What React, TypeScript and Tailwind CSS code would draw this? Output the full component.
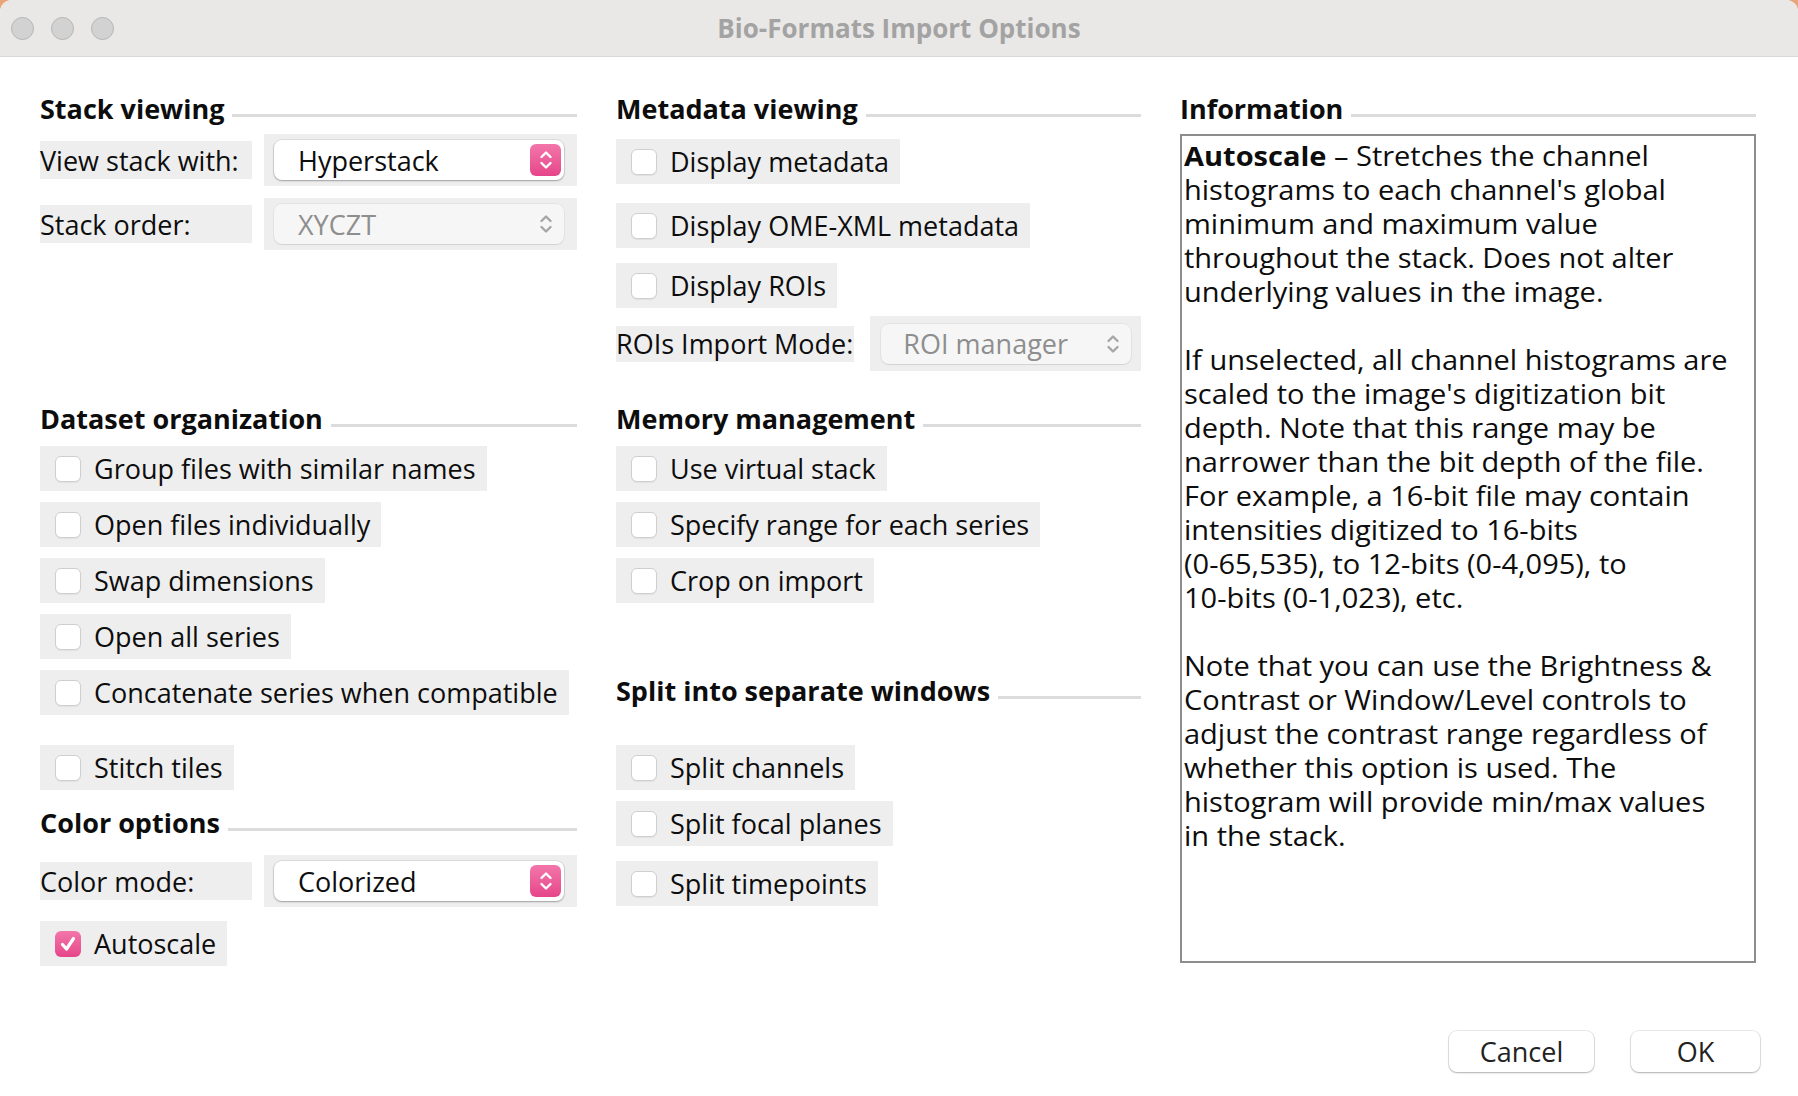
import type { ReactNode } from "react";

const info: ReactNode[] = [
  <>
    <b>Autoscale</b> – Stretches the channel
  </>,
  "histograms to each channel's global",
  "minimum and maximum value",
  "throughout the stack. Does not alter",
  "underlying values in the image.",
  "",
  "If unselected, all channel histograms are",
  "scaled to the image's digitization bit",
  "depth. Note that this range may be",
  "narrower than the bit depth of the file.",
  "For example, a 16-bit file may contain",
  "intensities digitized to 16-bits",
  "(0-65,535), to 12-bits (0-4,095), to",
  "10-bits (0-1,023), etc.",
  "",
  "Note that you can use the Brightness &",
  "Contrast or Window/Level controls to",
  "adjust the contrast range regardless of",
  "whether this option is used. The",
  "histogram will provide min/max values",
  "in the stack.",
];

function Heading({ children, className = "" }: { children: ReactNode; className?: string }) {
  return (
    <div className={`flex h-[36px] items-center ${className}`}>
      <span className="text-[27px] font-bold leading-none text-[#0d0d0d]">{children}</span>
      <div className="ml-[8px] mt-[14px] h-[3px] flex-1 bg-[#dcdcdc]" />
    </div>
  );
}

function Arrows({ color }: { color: string }) {
  return (
    <svg width="16" height="24" viewBox="0 0 16 24" fill="none" stroke={color} strokeWidth="2.4" strokeLinecap="round" strokeLinejoin="round">
      <path d="M3.5 9 L8 4.5 L12.5 9" />
      <path d="M3.5 15 L8 19.5 L12.5 15" />
    </svg>
  );
}

function Box({ checked }: { checked?: boolean }) {
  if (checked) {
    return (
      <div className="flex h-[26px] w-[26px] items-center justify-center rounded-[6px] bg-linear-to-b from-[#f276aa] to-[#e6448a]">
        <svg width="20" height="20" viewBox="0 0 20 20" fill="none" stroke="white" strokeWidth="3.2" strokeLinecap="round" strokeLinejoin="round">
          <path d="M4.5 10.5 L8.5 15 L15.5 4.5" />
        </svg>
      </div>
    );
  }
  return <div className="h-[26px] w-[26px] rounded-[6px] border border-[#cfcfcf] bg-white shadow-[0_1px_1px_rgba(0,0,0,0.06)]" />;
}

function Check({ label, checked, className = "" }: { label: string; checked?: boolean; className?: string }) {
  return (
    <div className={`flex h-[45px] w-fit items-center bg-[#eeeeee] pl-[15px] pr-[11px] ${className}`}>
      <Box checked={checked} />
      <span className="ml-[13px] whitespace-nowrap text-[27px] leading-none text-[#0d0d0d]">{label}</span>
    </div>
  );
}

function Select({ value, disabled }: { value: string; disabled?: boolean }) {
  return (
    <div className="flex h-[52px] w-[313px] items-center bg-[#eeeeee] pl-[10px]">
      <div
        className={`flex h-[40px] w-[290px] items-center rounded-[8px] pl-[24px] pr-[3px] ${
          disabled
            ? "bg-[#f6f6f6] text-[#8e8e8e] shadow-[0_0_0_1px_rgba(0,0,0,0.04),0_1px_1px_rgba(0,0,0,0.08)]"
            : "bg-white text-[#0d0d0d] shadow-[0_0_0_1px_rgba(0,0,0,0.07),0_1px_2px_rgba(0,0,0,0.28)]"
        }`}
      >
        <span className="flex-1 text-[27px] leading-none">{value}</span>
        {disabled ? (
          <div className="flex h-[32px] w-[31px] items-center justify-center">
            <Arrows color="#a6a6a6" />
          </div>
        ) : (
          <div className="flex h-[32px] w-[31px] items-center justify-center rounded-[6px] bg-linear-to-b from-[#f276aa] to-[#e6448a]">
            <Arrows color="white" />
          </div>
        )}
      </div>
    </div>
  );
}

function LabeledSelect({ label, value, disabled, className = "" }: { label: string; value: string; disabled?: boolean; className?: string }) {
  return (
    <div className={`flex items-center ${className}`}>
      <div className="flex h-[38px] w-[212px] items-center bg-[#eeeeee] text-[27px] leading-none text-[#0d0d0d]">{label}</div>
      <div className="ml-[12px]">
        <Select value={value} disabled={disabled} />
      </div>
    </div>
  );
}

function Button({ children, className = "" }: { children: ReactNode; className?: string }) {
  return (
    <div
      className={`flex h-[41px] items-center justify-center rounded-[8px] bg-white text-[27px] leading-none text-[#222] shadow-[0_0_0_1px_rgba(0,0,0,0.08),0_1px_2px_rgba(0,0,0,0.25)] ${className}`}
    >
      {children}
    </div>
  );
}

export default function App() {
  return (
    <div className="h-[1096px] w-[1798px] bg-[#e9a57a]">
      <div className="flex h-full w-full flex-col overflow-hidden rounded-t-[12px] bg-white font-['Open_Sans','DejaVu_Sans',sans-serif]">
        {/* Title bar */}
        <div className="flex h-[57px] shrink-0 items-center border-b border-[#d8d8d8] bg-[#e9e8e6] px-[10px]">
          <div className="flex w-[200px] gap-[17px] pl-[1px]">
            <div className="h-[23px] w-[23px] rounded-full border border-[#b6b6b6] bg-[#d2d2d2]" />
            <div className="h-[23px] w-[23px] rounded-full border border-[#b6b6b6] bg-[#d2d2d2]" />
            <div className="h-[23px] w-[23px] rounded-full border border-[#b6b6b6] bg-[#d2d2d2]" />
          </div>
          <div className="flex-1 pr-[200px] text-center text-[26px] font-bold text-[#a3a3a3]">Bio-Formats Import Options</div>
        </div>

        {/* Columns */}
        <div className="flex h-[914px] shrink-0 pl-[40px]">
          {/* Column 1 */}
          <div className="flex w-[537px] flex-col">
            <Heading className="mt-[33px]">Stack viewing</Heading>
            <LabeledSelect className="mt-[8px]" label="View stack with:" value="Hyperstack" />
            <LabeledSelect className="mt-[12px]" label="Stack order:" value="XYCZT" disabled />

            <Heading className="mt-[150px]">Dataset organization</Heading>
            <Check className="mt-[10px]" label="Group files with similar names" />
            <Check className="mt-[11px]" label="Open files individually" />
            <Check className="mt-[11px]" label="Swap dimensions" />
            <Check className="mt-[11px]" label="Open all series" />
            <Check className="mt-[11px]" label="Concatenate series when compatible" />
            <Check className="mt-[30px]" label="Stitch tiles" />

            <Heading className="mt-[14px]">Color options</Heading>
            <LabeledSelect className="mt-[15px]" label="Color mode:" value="Colorized" />
            <Check className="mt-[14px]" label="Autoscale" checked />
          </div>

          {/* Column 2 */}
          <div className="ml-[39px] flex w-[525px] flex-col">
            <Heading className="mt-[33px]">Metadata viewing</Heading>
            <Check className="mt-[13px]" label="Display metadata" />
            <Check className="mt-[19px]" label="Display OME-XML metadata" />
            <Check className="mt-[15px]" label="Display ROIs" />
            <div className="mt-[8px] flex items-center">
              <div className="flex h-[36px] items-center whitespace-nowrap bg-[#eeeeee] pr-[1px] text-[27px] leading-none text-[#0d0d0d]">ROIs Import Mode:</div>
              <div className="ml-[16px] flex h-[55px] w-[272px] items-center bg-[#eeeeee] pl-[11px]">
                <div className="flex h-[40px] w-[250px] items-center rounded-[8px] bg-[#f6f6f6] pl-[22px] pr-[3px] text-[#8e8e8e] shadow-[0_0_0_1px_rgba(0,0,0,0.04),0_1px_1px_rgba(0,0,0,0.08)]">
                  <span className="flex-1 text-[27px] leading-none">ROI manager</span>
                  <div className="flex h-[32px] w-[31px] items-center justify-center">
                    <Arrows color="#a6a6a6" />
                  </div>
                </div>
              </div>
            </div>

            <Heading className="mt-[29px]">Memory management</Heading>
            <Check className="mt-[10px]" label="Use virtual stack" />
            <Check className="mt-[11px]" label="Specify range for each series" />
            <Check className="mt-[11px]" label="Crop on import" />

            <Heading className="mt-[69px]">Split into separate windows</Heading>
            <Check className="mt-[37px]" label="Split channels" />
            <Check className="mt-[11px]" label="Split focal planes" />
            <Check className="mt-[15px]" label="Split timepoints" />
          </div>

          {/* Column 3 */}
          <div className="ml-[39px] flex w-[576px] flex-col">
            <Heading className="mt-[33px]">Information</Heading>
            <div className="mt-[8px] h-[829px] overflow-hidden border-2 border-[#8d8d8d] bg-white pl-[2px] pt-[3px]">
              {info.map((line, i) => (
                <div key={i} className="h-[34px] origin-left scale-x-[1.074] whitespace-nowrap text-[27px] leading-[34px] text-[#0d0d0d]">
                  {line}
                </div>
              ))}
            </div>
          </div>
        </div>

        {/* Buttons */}
        <div className="flex justify-end gap-[37px] pr-[38px] pt-[60px]">
          <Button className="w-[145px]">Cancel</Button>
          <Button className="w-[129px]">OK</Button>
        </div>
      </div>
    </div>
  );
}
